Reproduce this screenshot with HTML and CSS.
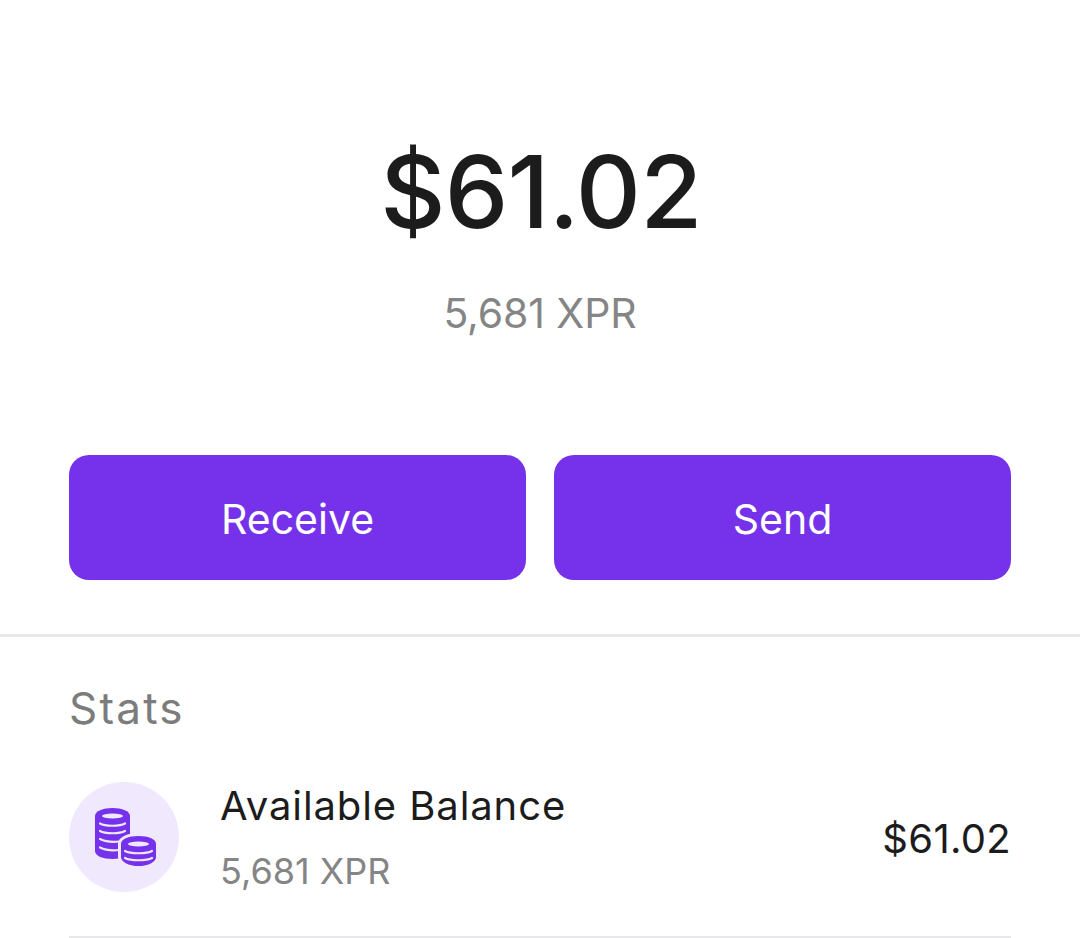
FILE: index.html
```html
<!DOCTYPE html>
<html lang="en">
<head>
<meta charset="utf-8">
<title>Wallet</title>
<link rel="stylesheet" href="styles.css">
</head>
<body>
<section class="hero">
  <h1 class="amount">$61.02</h1>
  <p class="sub">5,681 XPR</p>
  <div class="actions">
    <button class="btn">Receive</button>
    <button class="btn">Send</button>
  </div>
</section>
<section class="stats">
  <h2 class="stats-title">Stats</h2>
  <div class="row">
    <div class="icon-wrap">
      <svg class="coin-icon" viewBox="0 0 61 58" width="61" height="58" aria-hidden="true">
        <path fill="#7632ea" d="M0 8C0 3 8 0 17.5 0S35 3 35 8V40C35 48 27 51 17.5 51S0 48 0 43z"/>
        <g fill="none" stroke="#f0e8fd" stroke-linecap="round">
          <ellipse cx="17.5" cy="8" rx="10.500" ry="2.600" fill="#f0e8fd" stroke="none"/>
          <path stroke-width="2.200" d="M5 15.500C10 18.500 25 18.500 30 15.500M5 23C10 26 25 26 30 23M5 31C10 33.500 19 34 24 33.500M5 39.500C10 42 19 42.500 24 42"/>
        </g>
        <path fill="#7632ea" stroke="#f0e8fd" stroke-width="3" d="M24.500 36C24.500 30 33 26.500 43.500 26.500S62.500 30 62.500 36V49C62.500 55 54 59.500 43.500 59.500S24.500 55 24.500 49z"/>
        <g fill="none" stroke="#f0e8fd" stroke-linecap="round">
          <ellipse cx="43.500" cy="36" rx="10.500" ry="2.600" fill="#f0e8fd" stroke="none"/>
          <path stroke-width="2.200" d="M30 43C35 46 52 46 57 43M30 50C35 53 52 53 57 50"/>
        </g>
      </svg>
    </div>
    <div class="row-text">
      <div class="row-title">Available Balance</div>
      <div class="row-sub">5,681 XPR</div>
    </div>
    <div class="row-value">$61.02</div>
  </div>
</section>
</body>
</html>
```
FILE: styles.css
```css
* { box-sizing: border-box; }
html, body { margin: 0; padding: 0; }
body { width: 1080px; height: 938px; overflow: hidden; background: #fff; font-family: "Inter", "Liberation Sans", sans-serif; color: #1c1c1c; }
.hero { height: 637px; padding: 136px 69px 0; border-bottom: 3px solid #e8e8ea; text-align: center; }
.amount { margin: 0; padding-left: 2px; font-size: 101px; line-height: 110px; font-weight: 500; letter-spacing: -.8px; }
.sub { margin: 44px 0 0; font-size: 41px; line-height: 47px; color: #858585; letter-spacing: -.1px; }
.actions { display: flex; gap: 28px; margin-top: 118px; }
.btn { flex: 1; height: 125px; border: 0; border-radius: 20px; background: #7632ea; color: #fff; font: 400 41px "Inter", "Liberation Sans", sans-serif; padding: 2px 0 0; }
.stats { padding: 43px 69px 0; }
.stats-title { margin: 0; font-size: 44px; line-height: 56px; font-weight: 400; color: #7c7c7c; letter-spacing: 2.200px; }
.row { display: flex; align-items: center; margin-top: 44px; border-bottom: 2px solid #e8e8ea; padding-bottom: 43px; }
.icon-wrap { width: 110px; height: 110px; border-radius: 50%; background: #f0e8fd; display: flex; align-items: center; justify-content: center; flex: none; padding-left: 2px; }
.row-text { flex: 1; margin-left: 41px; padding-top: 1px; }
.row-title { font-size: 40px; line-height: 50px; letter-spacing: .9px; }
.row-sub { font-size: 36px; line-height: 44px; margin-top: 18px; color: #858585; }
.row-value { font-size: 40px; line-height: 50px; letter-spacing: .3px; padding-top: 4px; }
```
